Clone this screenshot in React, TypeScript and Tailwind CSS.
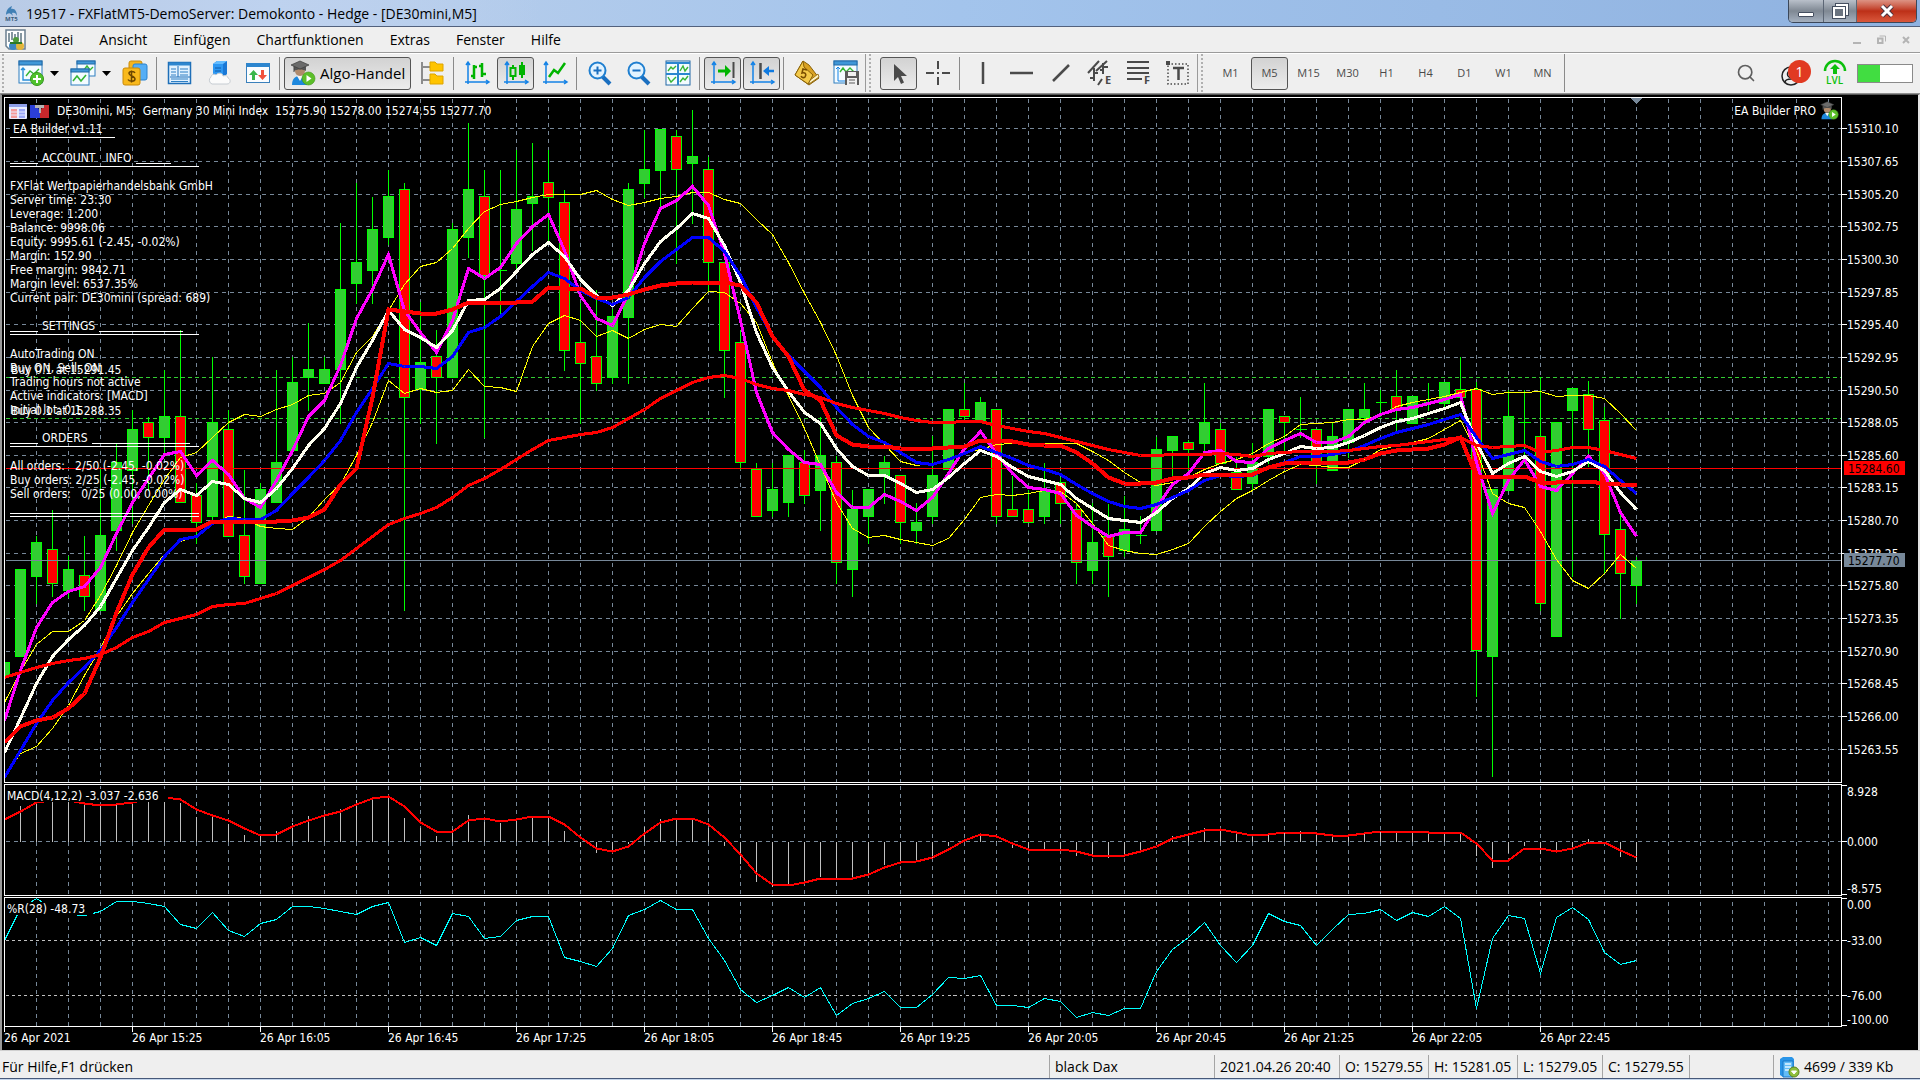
import { ReactNode } from 'react'
import { Search } from 'lucide-react'

// One entry per M5 bar: [high, body top, body bottom, low, direction]
// direction: 1 = up, 0 = down, 2 = doji
const BARS: number[][] = [
  [662, 662, 675, 675, 1], [569, 569, 656, 656, 1], [535, 542, 576, 603, 1], [509, 549, 583, 596, 0],
  [555, 569, 590, 597, 1], [535, 575, 596, 610, 0], [468, 535, 610, 610, 1], [442, 462, 530, 550, 1],
  [409, 429, 470, 523, 1], [416, 422, 437, 490, 0], [369, 416, 437, 453, 1], [329, 416, 502, 502, 0],
  [482, 495, 522, 543, 0], [356, 422, 516, 520, 1], [409, 429, 536, 536, 0], [469, 535, 576, 583, 0],
  [482, 489, 583, 583, 1], [369, 462, 502, 502, 1], [356, 382, 450, 450, 1], [322, 369, 377, 410, 1],
  [356, 369, 383, 383, 1], [222, 289, 369, 423, 1], [182, 262, 283, 303, 1], [196, 229, 270, 303, 1],
  [169, 196, 237, 244, 1], [182, 189, 397, 610, 0], [301, 362, 389, 423, 1], [329, 356, 377, 443, 0],
  [222, 229, 377, 377, 1], [122, 189, 237, 257, 1], [169, 196, 275, 437, 0], [169, 270, 270, 313, 2],
  [149, 209, 263, 268, 1], [142, 196, 203, 250, 1], [149, 182, 197, 243, 0], [189, 202, 350, 370, 0],
  [302, 342, 363, 423, 0], [289, 356, 383, 390, 0], [308, 316, 377, 383, 1], [182, 189, 317, 383, 1],
  [129, 169, 183, 197, 1], [129, 129, 170, 208, 1], [129, 136, 169, 263, 0], [109, 156, 163, 223, 1],
  [156, 169, 262, 290, 0], [262, 262, 350, 397, 0], [329, 342, 462, 469, 0], [462, 469, 516, 516, 0],
  [462, 489, 510, 516, 1], [455, 455, 502, 516, 1], [449, 462, 495, 503, 0], [416, 455, 490, 530, 1],
  [455, 462, 562, 583, 0], [489, 509, 569, 596, 1], [489, 489, 516, 543, 1], [455, 462, 475, 503, 1],
  [475, 475, 522, 543, 0], [502, 522, 530, 543, 1], [435, 475, 516, 523, 1], [409, 409, 469, 469, 1],
  [382, 409, 416, 419, 0], [396, 402, 421, 421, 1], [409, 409, 516, 523, 0], [475, 509, 516, 516, 0],
  [489, 509, 522, 522, 0], [462, 491, 516, 523, 1], [476, 482, 503, 523, 0], [502, 509, 562, 583, 0],
  [502, 542, 570, 583, 1], [503, 536, 556, 596, 0], [495, 529, 550, 556, 1], [515, 535, 535, 543, 2],
  [436, 449, 530, 530, 1], [436, 436, 450, 477, 1], [439, 442, 449, 472, 0], [382, 422, 443, 450, 1],
  [422, 429, 463, 463, 0], [456, 472, 489, 489, 0], [442, 462, 483, 489, 1], [409, 409, 456, 463, 1],
  [416, 416, 422, 450, 0], [396, 429, 429, 437, 2], [429, 429, 462, 483, 0], [422, 436, 470, 470, 1],
  [409, 409, 442, 457, 1], [382, 409, 417, 424, 1], [389, 402, 402, 416, 2], [369, 396, 409, 430, 0],
  [396, 396, 423, 423, 1], [382, 402, 402, 410, 2], [382, 382, 403, 408, 1], [356, 389, 397, 397, 0],
  [381, 389, 650, 696, 0], [489, 489, 656, 776, 1], [389, 416, 490, 490, 1], [389, 422, 422, 463, 2],
  [376, 436, 603, 610, 0], [422, 422, 636, 636, 1], [388, 388, 410, 576, 1], [380, 394, 429, 466, 0],
  [406, 420, 534, 573, 0], [513, 529, 573, 618, 0], [556, 560, 585, 603, 1],
]

const FAST = [
  720, 670, 627, 602, 591, 586, 567, 533, 502, 478, 454, 451, 475, 460, 474, 498, 507, 480, 450, 416,
  400, 365, 318, 289, 254, 310, 332, 352, 320, 268, 278, 267, 243, 226, 214, 250, 295, 318, 325, 293,
  243, 208, 200, 186, 205, 253, 320, 392, 432, 449, 462, 464, 492, 507, 507, 494, 501, 510, 497, 473,
  448, 431, 453, 473, 487, 489, 493, 515, 526, 536, 532, 532, 507, 484, 473, 452, 450, 461, 462, 448,
  440, 433, 442, 442, 436, 422, 414, 409, 407, 403, 399, 394, 462, 513, 480, 459, 486, 490, 473, 456,
  473, 512, 536,
]
const MID = [
  752, 718, 683, 656, 639, 625, 606, 578, 550, 527, 502, 489, 495, 481, 484, 498, 502, 488, 468, 445,
  428, 403, 367, 340, 310, 329, 337, 347, 330, 300, 299, 288, 271, 254, 242, 256, 279, 295, 305, 290,
  263, 241, 228, 213, 218, 245, 282, 332, 367, 391, 412, 423, 448, 466, 475, 475, 483, 492, 489, 477,
  463, 450, 456, 467, 476, 480, 484, 498, 508, 518, 520, 522, 512, 498, 488, 473, 467, 470, 468, 459,
  453, 446, 448, 447, 442, 435, 427, 421, 418, 413, 408, 402, 442, 473, 463, 456, 471, 476, 471, 461,
  470, 492, 509,
]
const SLOW = [
  777, 750, 723, 700, 682, 667, 650, 627, 602, 579, 556, 539, 536, 523, 518, 519, 519, 510, 493, 477,
  460, 440, 412, 388, 363, 366, 366, 368, 356, 332, 327, 316, 301, 286, 272, 278, 290, 298, 304, 297,
  277, 261, 249, 237, 237, 251, 275, 307, 336, 355, 371, 387, 407, 424, 436, 442, 452, 462, 464, 459,
  453, 446, 452, 458, 465, 469, 474, 484, 493, 501, 506, 508, 504, 497, 490, 480, 475, 476, 475, 467,
  462, 456, 456, 454, 451, 445, 438, 432, 428, 424, 419, 414, 437, 458, 454, 450, 461, 466, 464, 459,
  466, 480, 493,
]
const STOP = [
  742, 726, 720, 717, 708, 693, 657, 612, 574, 547, 529, 529, 529, 521, 521, 521, 521, 521, 520, 517,
  509, 484, 468, 397, 309, 311, 313, 313, 309, 302, 302, 302, 302, 301, 287, 288, 288, 297, 297, 294,
  289, 285, 283, 282, 282, 282, 285, 302, 336, 356, 390, 400, 435, 444, 446, 446, 448, 448, 448, 447,
  446, 440, 440, 441, 444, 445, 445, 452, 463, 477, 483, 483, 482, 478, 477, 474, 474, 474, 474, 467,
  463, 462, 462, 462, 462, 459, 453, 450, 449, 448, 444, 437, 476, 476, 476, 476, 482, 482, 481, 481,
  483, 484, 484,
]
const TREND = [
  677, 672, 667, 663, 660, 658, 654, 647, 637, 631, 622, 618, 614, 606, 604, 603, 598, 593, 585, 577,
  569, 560, 548, 536, 524, 518, 513, 507, 497, 485, 478, 469, 459, 449, 440, 437, 434, 432, 427, 418,
  409, 398, 390, 382, 377, 375, 378, 384, 388, 390, 394, 397, 403, 407, 410, 413, 417, 420, 422, 422,
  421, 421, 425, 428, 431, 433, 437, 441, 445, 449, 452, 455, 455, 454, 454, 454, 453, 454, 456, 453,
  452, 451, 451, 451, 450, 448, 446, 445, 443, 441, 439, 437, 445, 447, 446, 445, 452, 450, 447, 447,
  450, 454, 458,
]
const BAND_TOP = [
  702, 671, 644, 631, 631, 620, 595, 565, 532, 505, 479, 457, 452, 437, 422, 414, 416, 409, 404, 395,
  393, 382, 352, 336, 310, 284, 266, 262, 248, 228, 211, 204, 201, 197, 194, 194, 194, 190, 199, 205,
  202, 198, 196, 192, 192, 199, 203, 219, 234, 262, 293, 322, 355, 395, 427, 444, 461, 465, 463, 458,
  452, 449, 444, 443, 443, 443, 443, 443, 451, 460, 472, 482, 485, 482, 477, 469, 463, 459, 453, 443,
  436, 424, 423, 422, 419, 419, 415, 406, 402, 399, 396, 392, 388, 394, 392, 392, 391, 396, 395, 395,
  398, 413, 430,
]
const BAND_BOTTOM = [
  777, 753, 746, 728, 705, 675, 648, 616, 593, 573, 554, 541, 535, 523, 516, 518, 526, 528, 529, 517,
  499, 484, 455, 422, 380, 393, 388, 392, 390, 369, 386, 387, 391, 346, 323, 315, 320, 336, 330, 338,
  329, 324, 326, 308, 291, 292, 303, 322, 362, 395, 428, 465, 502, 528, 537, 535, 539, 542, 545, 538,
  519, 497, 494, 495, 493, 490, 491, 503, 523, 545, 550, 553, 554, 549, 543, 526, 511, 498, 490, 480,
  471, 464, 465, 467, 467, 459, 449, 445, 442, 438, 429, 420, 450, 493, 503, 507, 531, 559, 580, 588,
  573, 554, 568,
]
const SIGNAL = [
  819, 811, 802, 800, 800, 803, 805, 804, 802, 798, 797, 799, 809, 815, 820, 828, 835, 834, 826, 820,
  815, 811, 804, 798, 796, 806, 822, 831, 831, 820, 818, 821, 819, 816, 816, 824, 837, 848, 851, 846,
  833, 822, 818, 818, 824, 837, 854, 873, 884, 885, 882, 878, 878, 878, 874, 867, 862, 861, 857, 849,
  840, 834, 836, 843, 849, 849, 849, 851, 855, 855, 855, 851, 846, 838, 834, 830, 829, 832, 835, 834,
  832, 832, 833, 835, 835, 833, 831, 831, 831, 832, 832, 832, 843, 860, 860, 848, 848, 851, 848, 842,
  842, 850, 857,
]
const HISTOGRAM = [
  841, 805, 801, 801, 801, 803, 805, 803, 801, 801, 801, 802, 816, 816, 823, 834, 835, 830, 822, 815,
  815, 808, 799, 798, 797, 817, 827, 835, 828, 814, 821, 822, 819, 817, 816, 830, 846, 852, 850, 843,
  826, 818, 818, 818, 827, 845, 863, 881, 886, 885, 881, 876, 878, 877, 872, 864, 860, 861, 857, 845,
  838, 832, 840, 847, 850, 848, 848, 855, 854, 857, 854, 850, 843, 835, 833, 827, 830, 833, 836, 832,
  832, 830, 833, 836, 834, 833, 830, 831, 831, 833, 831, 833, 855, 867, 852, 845, 853, 850, 846, 838,
  842, 856, 861,
]
const WILLIAMS = [
  940, 908, 898, 908, 914, 915, 911, 901, 901, 903, 906, 924, 928, 912, 930, 936, 923, 919, 906, 906,
  908, 911, 914, 906, 902, 942, 937, 945, 913, 916, 938, 936, 920, 916, 916, 957, 961, 966, 948, 915,
  909, 900, 909, 909, 938, 960, 989, 1002, 995, 987, 997, 987, 1015, 1003, 998, 991, 1007, 1007, 994, 977,
  978, 975, 1005, 1005, 1007, 998, 1001, 1017, 1012, 1015, 1008, 1008, 971, 949, 937, 922, 945, 962, 945, 913,
  921, 925, 945, 929, 914, 913, 909, 920, 912, 916, 906, 918, 1008, 938, 915, 918, 973, 917, 907, 919,
  952, 964, 960,
]

const PRICES: [string, number][] = [
  ['15310.10', 128], ['15307.65', 161], ['15305.20', 194], ['15302.75', 226], ['15300.30', 259],
  ['15297.85', 292], ['15295.40', 324], ['15292.95', 357], ['15290.50', 390], ['15288.05', 422],
  ['15285.60', 455], ['15283.15', 487], ['15280.70', 520], ['15278.25', 553], ['15275.80', 585],
  ['15273.35', 618], ['15270.90', 651], ['15268.45', 683], ['15266.00', 716], ['15263.55', 749],
]
const TIMES = [
  '26 Apr 2021', '26 Apr 15:25', '26 Apr 16:05', '26 Apr 16:45', '26 Apr 17:25', '26 Apr 18:05', '26 Apr 18:45',
  '26 Apr 19:25', '26 Apr 20:05', '26 Apr 20:45', '26 Apr 21:25', '26 Apr 22:05', '26 Apr 22:45',
]
const MENUS = ['Datei', 'Ansicht', 'Einfügen', 'Chartfunktionen', 'Extras', 'Fenster', 'Hilfe']
const TIMEFRAMES = ['M1', 'M5', 'M15', 'M30', 'H1', 'H4', 'D1', 'W1', 'MN']

const barX = (i: number) => 4 + 16 * i
const toPoints = (ys: number[]) => ys.map((y, i) => `${barX(i)},${y}`).join(' ')

function Chart() {
  const gridX = Array.from({ length: 57 }, (_, i) => 36 + 32 * i)
  return (
    <svg
      viewBox="2 95 1916 955"
      className="block w-full bg-black font-['DejaVu_Sans_Condensed',sans-serif] text-[12px]"
      shapeRendering="crispEdges"
      role="img"
      aria-label="DE30mini, M5"
    >
      <defs>
        <clipPath id="panes"><rect x="4" y="97" width="1837" height="930" /></clipPath>
      </defs>
      <g transform="translate(.5 .5)" fill="none">
        <g stroke="#778899" strokeDasharray="4 4">
          {gridX.map(x => (
            <g key={x}>
              <path d={`M${x} 98V781`} />
              <path d={`M${x} 785V894`} />
              <path d={`M${x} 901V1025`} />
            </g>
          ))}
          {PRICES.map(([p, y]) => <path key={p} d={`M5 ${y}H1840`} />)}
          <path d="M5 841H1840" />
        </g>
        <path d="M5 940H1840M5 995H1840" stroke="#c0c0c0" strokeDasharray="3 3" />
        <path d="M5 377H1840M5 418H1840" stroke="#32cd32" strokeDasharray="4 3" />

        <g clipPath="url(#panes)">
          {BARS.map(([high, top, bottom, low, dir], i) => {
            const x = barX(i)
            return (
              <g key={i} stroke="#00ff00">
                <path d={`M${x} ${high}V${low}`} />
                {dir === 2
                  ? <path d={`M${x - 5} ${top}H${x + 6}`} />
                  : <rect x={x - 5} y={top} width="10" height={bottom - top} fill={dir ? '#32cd32' : '#ff0000'} />}
              </g>
            )
          })}
          <path d="M5 468H1840" stroke="#ff0000" />
          <path d="M5 560H1840" stroke="#778899" />
          <polyline points={toPoints(BAND_TOP)} stroke="#ffff00" />
          <polyline points={toPoints(BAND_BOTTOM)} stroke="#ffff00" />
          <polyline points={toPoints(FAST)} stroke="#ff00ff" strokeWidth="3" />
          <polyline points={toPoints(MID)} stroke="#fffff0" strokeWidth="3" />
          <polyline points={toPoints(SLOW)} stroke="#0000ff" strokeWidth="3" />
          <polyline points={toPoints(TREND)} stroke="#ff0000" strokeWidth="3" />
          <polyline points={toPoints(STOP)} stroke="#ff0000" strokeWidth="4" />

          {HISTOGRAM.map((y, i) => <path key={i} d={`M${barX(i)} 841V${y}`} stroke="#c0c0c0" />)}
          <polyline points={toPoints(SIGNAL)} stroke="#ff0000" strokeWidth="2" />
          <polyline points={toPoints(WILLIAMS)} stroke="#00ffff" />
        </g>

        {/* pane frames, axis ticks */}
        <path
          stroke="#ffffff"
          d="M1841 97H4V782H1841ZM1841 784H4V895H1841ZM1841 897H4V1026H1841Z"
        />
        <path
          stroke="#ffffff"
          d={PRICES.map(([, y]) => `M1841 ${y}H1846`).join('') + 'M1841 785H1846M1841 841H1846M1841 894H1846M1841 898H1846M1841 940H1846M1841 995H1846M1841 1025H1846'}
        />
        <path stroke="#ffffff" d={TIMES.map((_, i) => `M${4 + 128 * i} 1026V1031`).join('')} />
      </g>

      <path d="M1630 98H1643L1636.500 104Z" fill="#778899" />

      <rect x="6" y="789" width="162" height="13" fill="#000000" />
      <rect x="6" y="902" width="87" height="13" fill="#000000" />
      <g fill="#ffffff">
        <text x="7" y="800">MACD(4,12,2) -3.037 -2.636</text>
        <text x="7" y="913">%R(28) -48.73</text>
        <text x="11" y="374">Buy 0.1 at 15291.45</text>
        <text x="11" y="415">Buy 0.1 at 15288.35</text>
        {PRICES.map(([p, y]) => <text key={p} x="1847" y={y + 5}>{p}</text>)}
        <text x="1847" y="796">8.928</text>
        <text x="1847" y="846">0.000</text>
        <text x="1847" y="893">-8.575</text>
        <text x="1847" y="909">0.00</text>
        <text x="1847" y="945">-33.00</text>
        <text x="1847" y="1000">-76.00</text>
        <text x="1847" y="1024">-100.00</text>
        {TIMES.map((t, i) => <text key={t} x={4 + 128 * i} y="1042">{t}</text>)}
      </g>
      <rect x="1844" y="461" width="61" height="14" fill="#ff0000" />
      <text x="1848" y="473" fill="#000000">15284.60</text>
      <rect x="1844" y="553" width="61" height="14" fill="#778899" />
      <text x="1848" y="565" fill="#000000">15277.70</text>
    </svg>
  )
}

function Section({ title, right }: { title: string; right: string }) {
  return (
    <div className="mb-3 flex h-4 w-[189px] items-start gap-1 border-b border-white">
      <span className="h-[13px] w-7 border-b border-white" />
      <span className="whitespace-pre">{title}</span>
      <span className={`${right} h-[13px] border-b border-white`} />
    </div>
  )
}

function InfoPanel() {
  return (
    <div className="absolute left-[8px] top-[27px] whitespace-pre font-['DejaVu_Sans_Condensed',sans-serif] text-[12px] leading-[14px] text-white">
      <div className="mb-[13px] h-4 w-[105px] border-b border-white pl-[3px]">EA Builder v1.11</div>
      <Section title="ACCOUNT   INFO" right="w-[35px]" />
      <p>FXFlat Wertpapierhandelsbank GmbH</p>
      <p>Server time: 23:30</p>
      <p>Leverage: 1:200</p>
      <p>Balance: 9998.06</p>
      <p>Equity: 9995.61 (-2.45, -0.02%)</p>
      <p>Margin: 152.90</p>
      <p>Free margin: 9842.71</p>
      <p>Margin level: 6537.35%</p>
      <p className="mb-[14px]">Current pair: DE30mini (spread: 689)</p>
      <Section title="SETTINGS" right="w-[84px]" />
      <p>AutoTrading ON</p>
      <p>Buy ON, Sell: ON</p>
      <p>Trading hours not active</p>
      <p>Active indicators: [MACD]</p>
      <p className="mb-[14px]">Initial lot: 0.1</p>
      <Section title="ORDERS" right="w-[98px]" />
      <p>All orders:   2/50 (-2.45, -0.02%)</p>
      <p>Buy orders: 2/25 (-2.45, -0.02%)</p>
      <p>Sell orders:   0/25 (0.00, 0.00%)</p>
      <div className="mt-3 h-1 w-[189px] border-y border-white" />
    </div>
  )
}

function Student({ className }: { className: string }) {
  return (
    <svg viewBox="0 0 26 26" className={className} aria-hidden="true">
      <path d="M2 25c0-6 3-9 8-9s7 3 7 9z" fill="#1e88dd" />
      <path d="M7 16l3 5 3-5z" fill="#f5f5f5" />
      <circle cx="10" cy="11" r="5" fill="#b08a6c" />
      <path d="M4 7c0-2 12-2 12 0v4c-3-2-9-2-12 0z" fill="#555555" />
      <path d="M1 5l9-4 9 4-9 4z" fill="#6b6b6b" stroke="#3c3c3c" strokeWidth=".7" />
      <path d="M4 6v6" stroke="#444444" />
      <circle cx="18.500" cy="18.500" r="6.500" fill="#5cbf2a" stroke="#3f961a" strokeWidth=".6" />
      <path d="M16.500 15l5 3.500-5 3.500z" fill="#ffffff" />
    </svg>
  )
}

function Icon({ children }: { children: ReactNode }) {
  return (
    <svg viewBox="0 0 26 26" className="size-[26px] overflow-visible" fill="none" aria-hidden="true">
      {children}
    </svg>
  )
}

function Tool({ label, pressed, children }: { label: string; pressed?: boolean; children: ReactNode }) {
  return (
    <button
      type="button"
      aria-label={label}
      aria-pressed={pressed}
      className={`mx-px flex h-[33px] w-[37px] shrink-0 items-center justify-center rounded-[3px] border ${
        pressed ? 'border-[#555555] bg-linear-to-b from-[#d2d2d2] to-[#ececec]' : 'border-transparent'
      }`}
    >
      {children}
    </button>
  )
}

function Caret({ label }: { label: string }) {
  return (
    <button type="button" aria-label={label} className="flex h-[33px] w-[13px] shrink-0 items-center">
      <svg viewBox="0 0 9 5" className="h-[5px] w-[9px]"><path d="M0 0h9L4.500 5z" fill="#000000" /></svg>
    </button>
  )
}

const Sep = () => <div className="mx-[2px] h-[33px] w-[2px] shrink-0 border-l border-[#8a8a8a]" />

const Grip = () => (
  <div className="flex h-full w-[14px] shrink-0 items-center border-l border-[#9a9a9a] pl-[3px]">
    <div className="h-full border-l-2 border-dotted border-[#b0b0b0]" />
  </div>
)

const Axes = () => (
  <path d="M4 3v21M1 22h23M2 5l2-3 2 3M22 20l3 2-3 2" stroke="#1583e6" strokeWidth="1.500" />
)

const ChartWindow = ({ children }: { children?: ReactNode }) => (
  <>
    <rect x="1" y="1" width="23" height="22" fill="#f4fbff" stroke="#2f7fc0" />
    <rect x="1" y="1" width="23" height="4" fill="#3f97d8" stroke="#2369a5" />
    {children}
  </>
)

function Toolbar() {
  return (
    <div className="flex h-[41px] items-center border-b border-t border-b-[#8f8f8f] border-t-white bg-[#efefef] pb-px">
      <div className="ml-[2px] mr-[6px] h-full w-[3px] shrink-0 border-l-2 border-dotted border-[#b0b0b0]" />
      <Tool label="Neuer Chart">
        <Icon>
          <ChartWindow>
            <path d="M5 8v12h14M3 10l2-2 2 2" stroke="#2a8fd8" strokeWidth="1.400" />
            <path d="M8 16l4-5 4 3 5-5" stroke="#35b535" strokeWidth="1.400" />
            <circle cx="19" cy="19" r="6.500" fill="#4fc22c" stroke="#379618" />
            <path d="M19 15v8M15 19h8" stroke="#ffffff" strokeWidth="2" />
          </ChartWindow>
        </Icon>
      </Tool>
      <Caret label="Neuer Chart Auswahl" />
      <Tool label="Profile">
        <Icon>
          <rect x="7" y="1" width="18" height="15" fill="#f4fbff" stroke="#2f7fc0" />
          <rect x="7" y="1" width="18" height="3" fill="#3f97d8" stroke="#2369a5" />
          <path d="M14 10l3-4 3 4 3-3" stroke="#35b535" strokeWidth="1.400" />
          <rect x="1" y="9" width="18" height="16" fill="#f4fbff" stroke="#2f7fc0" />
          <rect x="1" y="9" width="18" height="3" fill="#3f97d8" stroke="#2369a5" />
          <path d="M3 21l4-5 4 5 5-6" stroke="#35b535" strokeWidth="1.600" />
        </Icon>
      </Tool>
      <Caret label="Profile Auswahl" />
      <Tool label="Symbole">
        <Icon>
          <rect x="7" y="1" width="13" height="18" rx="2" fill="#f6b51c" stroke="#c98a08" />
          <rect x="11" y="4" width="14" height="16" rx="2" fill="#55aef5" stroke="#2b83cf" />
          <rect x="1" y="8" width="17" height="17" rx="2" fill="#f9b91c" stroke="#c98a08" />
          <path d="M13 13c-1-2-6-2-6 .5S13 16 13 19s-6 2.500-7 .5M9.500 10.500v12" stroke="#6e4700" strokeWidth="1.500" />
        </Icon>
      </Tool>
      <Sep />
      <Tool label="Marktübersicht">
        <Icon>
          <rect x="1.500" y="2.500" width="22" height="21" fill="#e2f2ff" stroke="#1f6fb8" strokeWidth="1.500" />
          <path d="M2 4h21" stroke="#2d86cf" strokeWidth="3" />
          <path d="M4 9h5M4 12h5M4 15h5M4 19h17M4 21.500h17M13 9h8M13 12h8M13 15h8" stroke="#2d7fc4" />
          <path d="M11 6v11M3 17h20" stroke="#1f6fb8" />
        </Icon>
      </Tool>
      <Tool label="Virtual Hosting">
        <Icon>
          <path d="M7 4l4-3h10v13l-4 4H7z" fill="#1a78d6" />
          <path d="M7 4h10v14H7z" fill="#2d97f2" />
          <path d="M7 4l4-3h10l-4 3z" fill="#63bcff" />
          <path d="M9 8h6M9 11h6" stroke="#0e5aa8" />
          <path d="M6 24a4 4 0 01-1-7c0-2 3-4 5-2 2-3 7-2 7 1 3-1 5 0 5 2 3 1 3 6-1 6z" fill="#fbfbfb" stroke="#c6ccd2" />
        </Icon>
      </Tool>
      <Tool label="Handel">
        <Icon>
          <rect x="1.500" y="3.500" width="23" height="19" fill="#fbfdff" stroke="#3a80bb" />
          <rect x="1.500" y="3" width="23" height="4" fill="#2d86cf" />
          <path d="M7 20v-5H4l4.500-5 4.500 5h-3v5z" fill="#39b54a" />
          <path d="M16 10v5h-3l4.500 5 4.500-5h-3v-5z" fill="#f0513c" />
        </Icon>
      </Tool>
      <Sep />
      <button
        type="button"
        aria-pressed="true"
        className="mx-px flex h-[33px] w-[127px] shrink-0 items-center gap-1 whitespace-nowrap rounded-[3px] border border-[#555555] bg-linear-to-b from-[#d2d2d2] to-[#ececec] pl-[5px] text-[15px]"
      >
        <Student className="size-[26px] shrink-0" />
        Algo-Handel
      </button>
      <Tool label="Navigator">
        <Icon>
          <path d="M3 2v22M3 7h8M3 20h8" stroke="#8c8c8c" strokeWidth="2" />
          <path d="M11 2h5l2 2h6v7H11zM11 14h5l2 2h6v8H11z" fill="#ffc400" stroke="#dda400" />
        </Icon>
      </Tool>
      <Sep />
      <Tool label="Balkenchart">
        <Icon><Axes /><path d="M10 5v14M7 16h3M10 7h3M18 3v14M15 6h3M18 14h4" stroke="#00b400" strokeWidth="2.500" /></Icon>
      </Tool>
      <Tool label="Kerzenchart" pressed>
        <Icon>
          <Axes />
          <path d="M10 5v15M19 2v16" stroke="#00b400" strokeWidth="2" />
          <rect x="7.500" y="8" width="5" height="8" fill="#dcdcdc" stroke="#00b400" strokeWidth="2" />
          <rect x="16" y="5" width="6" height="10" fill="#00b400" />
        </Icon>
      </Tool>
      <Tool label="Linienchart">
        <Icon><Axes /><path d="M7 17l5-7 4 3 7-10" stroke="#00b400" strokeWidth="2.500" /></Icon>
      </Tool>
      <Sep />
      <Tool label="Vergrößern">
        <Icon>
          <path d="M15 16l8 8" stroke="#1a6fc0" strokeWidth="4" />
          <circle cx="10.500" cy="10.500" r="8" fill="#e2f3ff" stroke="#1f7fd0" strokeWidth="2" />
          <path d="M10.500 6.500v8M6.500 10.500h8" stroke="#1a6fc0" strokeWidth="2" />
        </Icon>
      </Tool>
      <Tool label="Verkleinern">
        <Icon>
          <path d="M15 16l8 8" stroke="#1a6fc0" strokeWidth="4" />
          <circle cx="10.500" cy="10.500" r="8" fill="#e2f3ff" stroke="#1f7fd0" strokeWidth="2" />
          <path d="M6.500 10.500h8" stroke="#1a6fc0" strokeWidth="2" />
        </Icon>
      </Tool>
      <Tool label="Fenster anordnen">
        <Icon>
          <rect x="1" y="1" width="24" height="24" fill="#f4fbff" stroke="#2369a5" />
          <path d="M1 3h24M13 3v22M1 14h24" stroke="#2b86cf" strokeWidth="2" />
          <path d="M3 11l3-4 2 2 3-3M15 11l3-5 2 5 3-4M3 17l3 5 5-5M15 22l3-4 2 2 3-4" stroke="#35b535" strokeWidth="1.400" />
        </Icon>
      </Tool>
      <Sep />
      <Tool label="Auto Scroll" pressed>
        <Icon>
          <Axes />
          <path d="M8 11h9" stroke="#00b400" strokeWidth="3" />
          <path d="M15 5l6 6-6 6z" fill="#00b400" />
          <path d="M23.500 2v16" stroke="#4a4a4a" strokeWidth="2" />
        </Icon>
      </Tool>
      <Tool label="Chart verschieben" pressed>
        <Icon>
          <Axes />
          <path d="M11.500 3v16" stroke="#4a4a4a" strokeWidth="2.500" />
          <path d="M18 11h7" stroke="#0f7ae0" strokeWidth="2.500" />
          <path d="M20 6l-6 5 6 5z" fill="#0f7ae0" />
        </Icon>
      </Tool>
      <Sep />
      <Tool label="Indikatoren">
        <Icon>
          <path d="M9 1l6 4 10 13-10 7L1 15z" fill="#d9a224" stroke="#8a6209" />
          <path d="M15 24l10-7-1-3-9 7z" fill="#fff3c4" stroke="#8a6209" strokeWidth=".8" />
          <path d="M1 15L9 1l1 6 9 8-5 9z" fill="#f3c94a" stroke="#8a6209" />
          <path d="M13 10l-4-1-1 4c3-1 5 1 3 4-1 1-3 1-4-1" stroke="#7a4e00" strokeWidth="1.600" />
        </Icon>
      </Tool>
      <Tool label="Vorlagen">
        <Icon>
          <ChartWindow>
            <path d="M5 7v14h8M3 9l2-2 2 2" stroke="#1583e6" />
            <path d="M7 12l3 -4 3 4 4-4 5 5" stroke="#35b535" strokeWidth="1.400" />
            <rect x="12" y="11" width="14" height="14" fill="#5b5b5b" />
            <rect x="15" y="12" width="8" height="4" fill="#f0f0f0" />
            <rect x="14" y="18" width="10" height="7" fill="#f0f0f0" />
            <path d="M16 20h6M16 23h6" stroke="#5b5b5b" />
          </ChartWindow>
        </Icon>
      </Tool>
      <Grip />
      <Tool label="Cursor" pressed>
        <Icon><path d="M8 4v17l4-4 3 7 3-1.500-3-6.500h6z" fill="#4a4a4a" /></Icon>
      </Tool>
      <Tool label="Fadenkreuz">
        <Icon><path d="M13 1v8M13 17v8M1 13h8M17 13h8M12 13h2" stroke="#4a4a4a" strokeWidth="2" /></Icon>
      </Tool>
      <Sep />
      <Tool label="Vertikale Linie"><Icon><path d="M13 2v22" stroke="#4a4a4a" strokeWidth="2.500" /></Icon></Tool>
      <Tool label="Horizontale Linie"><Icon><path d="M1 13h23" stroke="#4a4a4a" strokeWidth="2.500" /></Icon></Tool>
      <Tool label="Trendlinie"><Icon><path d="M5 21L21 5" stroke="#4a4a4a" strokeWidth="2.500" /></Icon></Tool>
      <Tool label="Equidistanter Kanal">
        <Icon>
          <path d="M1 13L12 1M9 11l11-10M7 8v13M3 18h4M7 13h4M16 3v11M13 10h3M16 7h5M11 25l4-6" stroke="#4a4a4a" strokeWidth="2" />
          <text x="18" y="24" className="fill-[#4a4a4a] text-[11px] font-bold">E</text>
        </Icon>
      </Tool>
      <Tool label="Fibonacci Retracement">
        <Icon>
          <path d="M1 2h22M1 8h22M1 13h22M1 19h15" stroke="#4a4a4a" strokeWidth="2" />
          <text x="18" y="24" className="fill-[#4a4a4a] text-[11px] font-bold">F</text>
        </Icon>
      </Tool>
      <Tool label="Text">
        <Icon>
          <rect x="3" y="4" width="20" height="20" stroke="#4a4a4a" strokeWidth="1.500" strokeDasharray="1.500 2" />
          <path d="M1 1h4v4H1z" fill="#4a4a4a" />
          <path d="M8 8h11M13.500 8v12" stroke="#4a4a4a" strokeWidth="2.500" />
        </Icon>
      </Tool>
      <Grip />
      {TIMEFRAMES.map(tf => (
        <Tool key={tf} label={tf} pressed={tf === 'M5'}>
          <span className="text-[11px] text-[#4a4a4a]">{tf}</span>
        </Tool>
      ))}
      <div className="mx-[2px] h-full w-px shrink-0 bg-[#8a8a8a]" />
      <div className="ml-auto flex items-center pr-[7px]">
        <button type="button" aria-label="Suchen" className="mr-[25px]">
          <Search className="size-5 text-[#5f5f5f]" strokeWidth={2} />
        </button>
        <button type="button" aria-label="Mitteilungen" className="relative mr-3 h-[26px] w-[30px]">
          <svg viewBox="0 0 20 20" className="absolute bottom-0 left-0 size-5" fill="none" stroke="#222222" strokeWidth="1.500">
            <circle cx="10" cy="10" r="9" />
            <circle cx="10" cy="8" r="3.500" />
            <path d="M4 16c1-4 11-4 12 0" />
          </svg>
          <span className="absolute right-0 top-0 flex size-[23px] items-center justify-center rounded-full bg-[#e13a22] text-[14px] text-white">1</span>
        </button>
        <button type="button" aria-label="Level" className="relative mr-[10px] h-[26px] w-6">
          <svg viewBox="0 0 24 26" className="absolute inset-0 h-[26px] w-6 overflow-visible" fill="none">
            <path d="M2 11a10 10 0 0120 0" stroke="#0cbf0c" strokeWidth="2.500" />
            <path d="M12 4l5 5h-3v5h-4V9H7z" fill="#0cbf0c" />
            <text x="3" y="24" className="fill-[#0cbf0c] text-[10px] font-semibold">LVL</text>
          </svg>
        </button>
        <div className="h-[19px] w-[56px] border border-[#8a8a8a] bg-white">
          <div className="h-full w-[22px] bg-[#41dd41]" />
        </div>
      </div>
    </div>
  )
}

function TitleBar() {
  return (
    <header className="flex h-[27px] items-start justify-between border-b border-[#52617d] bg-linear-to-r from-[#c3d3ea] via-[#a3c4ec] to-[#8fb2e0]">
      <div className="flex h-[26px] items-center gap-[6px] bg-linear-to-r from-[#b9cbe6] via-[#bed2ef] to-transparent pl-1 pr-16">
        <svg viewBox="0 0 16 18" className="h-[18px] w-4 overflow-visible" aria-hidden="true">
          <path d="M2 11C2 6 5 3 8 2l-1 3c4-1 6 3 6 7-1-3-3-4-5-3l1 3C6 8 4 9 2 11z" fill="#3f7fb5" />
          <text x="1" y="17" className="fill-[#3b5d7d] text-[6px] font-bold">MT5</text>
        </svg>
        <h1 className="whitespace-nowrap text-[14px]">19517 - FXFlatMT5-DemoServer: Demokonto - Hedge - [DE30mini,M5]</h1>
      </div>
      <div className="mr-[3px] flex h-[23px] overflow-hidden rounded-b-[5px] border border-t-0 border-[#3b4759]">
        <button type="button" aria-label="Minimieren" className="flex w-[35px] items-end justify-center border-r border-[#5c6675] bg-linear-to-b from-[#b9c0ca] via-[#7f8893] to-[#a5b0bf] pb-[5px]">
          <span className="h-[5px] w-4 rounded-[1px] border border-[#454f60] bg-white" />
        </button>
        <button type="button" aria-label="Wiederherstellen" className="flex w-[33px] items-center justify-center border-r border-[#5c6675] bg-linear-to-b from-[#b9c0ca] via-[#7f8893] to-[#a5b0bf]">
          <svg viewBox="0 0 18 17" className="h-[17px] w-[18px]" fill="none">
            <rect x="6" y="2" width="10" height="9" stroke="#454f60" strokeWidth="4" />
            <rect x="6" y="2" width="10" height="9" stroke="#ffffff" strokeWidth="2" />
            <rect x="3" y="5" width="10" height="9" fill="#6b7480" stroke="#454f60" strokeWidth="4" />
            <rect x="3" y="5" width="10" height="9" fill="#6b7480" stroke="#ffffff" strokeWidth="2" />
          </svg>
        </button>
        <button type="button" aria-label="Schließen" className="flex w-[59px] items-center justify-center bg-linear-to-b from-[#dc9384] via-[#bd2f17] to-[#d9573b]">
          <svg viewBox="0 0 16 14" className="h-[14px] w-4" fill="none">
            <path d="M3 2l10 10M13 2L3 12" stroke="#4a3440" strokeWidth="5" />
            <path d="M3 2l10 10M13 2L3 12" stroke="#ffffff" strokeWidth="3" />
          </svg>
        </button>
      </div>
    </header>
  )
}

function MenuBar() {
  return (
    <nav className="flex h-[26px] items-center border-b border-[#9b9b9b] bg-[#efefef] pl-1 text-[14px]">
      <svg viewBox="0 0 22 22" className="mr-[13px] size-[22px]" aria-hidden="true">
        <path d="M2 1h19v19H5l-3-3z" fill="#ffffff" stroke="#6b7f90" strokeWidth="1.500" />
        <path d="M5 4v9M8 3v8M11 5v6M14 3v7M17 4v9" stroke="#5d7481" strokeWidth="1.500" />
        <circle cx="12" cy="11" r="3" fill="#4c9a3a" />
        <circle cx="9" cy="17" r="4" fill="#3e86c0" />
        <circle cx="16" cy="17" r="4" fill="#e3b53a" />
        <path d="M6 14h12" stroke="#2f7a25" strokeWidth="2" />
      </svg>
      <div className="flex gap-[26px]">
        {MENUS.map(m => <button key={m} type="button">{m}</button>)}
      </div>
      <div className="ml-auto flex items-center gap-4 pr-[10px]">
        <button type="button" aria-label="Chart minimieren" className="mt-[6px] h-[2px] w-2 bg-[#b4b4b4]" />
        <button type="button" aria-label="Chart wiederherstellen">
          <svg viewBox="0 0 9 9" className="size-[9px]" fill="none" stroke="#b4b4b4">
            <path d="M2.500 1h6v5.500" /><rect x="1" y="3.500" width="4.500" height="4.500" strokeWidth="2" />
          </svg>
        </button>
        <button type="button" aria-label="Chart schließen">
          <svg viewBox="0 0 8 8" className="size-2" fill="none" stroke="#b4b4b4" strokeWidth="2"><path d="M1 1l6 6M7 1L1 7" /></svg>
        </button>
      </div>
    </nav>
  )
}

function Cell({ className, children }: { className: string; children?: ReactNode }) {
  return (
    <div className={`flex h-[23px] shrink-0 items-center whitespace-nowrap border-l border-[#a5a5a5] pl-[5px] ${className}`}>
      {children}
    </div>
  )
}

function StatusBar() {
  return (
    <footer className="flex h-[29px] items-end border-b border-t border-b-[#47597a] border-t-[#d0d0d0] bg-[#efefef] text-[14px]">
      <div className="flex h-[23px] flex-1 items-center pl-[2px]">Für Hilfe,F1 drücken</div>
      <Cell className="w-[165px]">black Dax</Cell>
      <Cell className="w-[125px]">2021.04.26 20:40</Cell>
      <Cell className="w-[89px]">O: 15279.55</Cell>
      <Cell className="w-[89px]">H: 15281.05</Cell>
      <Cell className="w-[85px]">L: 15279.05</Cell>
      <Cell className="w-[87px]">C: 15279.55</Cell>
      <Cell className="w-[84px]" />
      <Cell className="w-[147px] gap-1">
        <svg viewBox="0 0 21 22" className="h-[22px] w-[21px]" aria-hidden="true">
          <path d="M1 3l3-2h9l2 2v16l-3 2H4l-3-2z" fill="#2a95e8" />
          <path d="M4 5h10v16H4z" fill="#63bcf7" stroke="#1976c8" />
          <path d="M6 8h6M6 11h6M6 14h4" stroke="#e3f5ff" strokeWidth="1.500" />
          <circle cx="15" cy="16" r="5" fill="#8fbf3c" stroke="#5b8420" />
          <path d="M12.500 15l2.500 3 2.500-3z" fill="#ffffff" stroke="#ffffff" />
        </svg>
        4699 / 339 Kb
      </Cell>
    </footer>
  )
}

export default function App() {
  return (
    <div className="min-h-screen bg-[#c5d6ec] font-['Open_Sans','Noto_Sans',sans-serif] text-black">
      <TitleBar />
      <MenuBar />
      <Toolbar />
      <main className="relative border-l-2 border-r-2 border-t border-l-[#9a9a9a] border-r-[#e3e3e3] border-t-[#555555]">
        <Chart />
        <div className="absolute left-[7px] top-[7px] flex items-center gap-[3px] whitespace-pre font-['DejaVu_Sans_Condensed',sans-serif] text-[12px] leading-[18px] text-white">
          <svg viewBox="0 0 18 15" className="h-[15px] w-[18px]" aria-hidden="true">
            <rect width="18" height="15" rx="1" fill="#e8ecff" />
            <rect x="0" y="0" width="18" height="3" fill="#8f9fe8" />
            <path d="M2 5h6v9H2z" fill="#f49a9a" />
            <path d="M10 5h6v9h-6z" fill="#9aa6f8" />
            <path d="M2 8h14M2 11h14" stroke="#e8ecff" />
          </svg>
          <svg viewBox="0 0 19 15" className="mr-[5px] h-[15px] w-[19px]" aria-hidden="true">
            <path d="M0 1h7l3 7v6H0z" fill="#2b3fd8" />
            <path d="M19 1h-6l-3 7v6h9z" fill="#c8282c" />
            <path d="M5 1h9v3h-3v5H9V4H5z" fill="#b4b4b4" />
          </svg>
          <span>DE30mini, M5:  Germany 30 Mini Index  15275.90 15278.00 15274.55 15277.70</span>
        </div>
        <InfoPanel />
        <div className="absolute right-[79px] top-[6px] flex items-center gap-1 font-['DejaVu_Sans_Condensed',sans-serif] text-[12px] text-white">
          EA Builder PRO
          <Student className="size-[19px]" />
        </div>
      </main>
      <StatusBar />
    </div>
  )
}
